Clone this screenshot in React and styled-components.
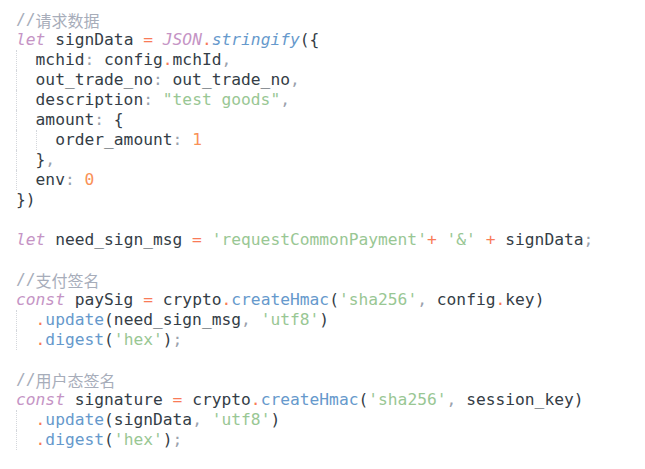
import React from "react";
import styled, { createGlobalStyle } from "styled-components";

const Global = createGlobalStyle`
  html, body { margin: 0; padding: 0; background: #ffffff; }
`;

const Editor = styled.div`
  box-sizing: border-box;
  width: 645px;
  height: 469px;
  background: #ffffff;
  padding: 10px 0 0 16px;
  font-family: "DejaVu Sans Mono", "Noto Sans CJK SC", monospace;
  font-size: 16.25px;
  color: #343d46;
  overflow: hidden;
`;

const Line = styled.div`
  display: flex;
  height: 20px;
  line-height: 20px;
  white-space: pre;
`;

const Indent = styled.span`
  display: inline-block;
  width: 2ch;
  height: 20px;
  flex: none;
  border-left: 1px dotted #d4d7dc;
  box-sizing: border-box;
`;

const colors = {
  t: "#343d46",
  c: "#a7adba",
  k: "#c594c5",
  f: "#6699cc",
  s: "#99c794",
  n: "#f99157",
  o: "#f97b57",
  p: "#9aa2ad",
};

const Tok = styled.span`
  color: ${(p) => colors[p.$kind] || colors.t};
  font-style: ${(p) => (p.$italic ? "italic" : "normal")};
  font-family: ${(p) =>
    p.$cjk
      ? `"Noto Sans CJK SC", "Noto Sans", sans-serif`
      : `"DejaVu Sans Mono", "Noto Sans CJK SC", monospace`};
  font-size: ${(p) => (p.$cjk ? "16px" : "inherit")};
`;

// token: [kind, text, italic?, cjk?]
const lines = [
  { i: 0, t: [["c", "//"], ["c", "请求数据", false, true]] },
  {
    i: 0,
    t: [
      ["k", "let", true], ["t", " signData "], ["o", "="], ["t", " "],
      ["k", "JSON", true], ["o", "."], ["f", "stringify", true], ["t", "({"],
    ],
  },
  { i: 1, t: [["t", "mchid"], ["p", ":"], ["t", " config"], ["o", "."], ["t", "mchId"], ["p", ","]] },
  { i: 1, t: [["t", "out_trade_no"], ["p", ":"], ["t", " out_trade_no"], ["p", ","]] },
  { i: 1, t: [["t", "description"], ["p", ":"], ["t", " "], ["s", '"test goods"'], ["p", ","]] },
  { i: 1, t: [["t", "amount"], ["p", ":"], ["t", " {"]] },
  { i: 2, t: [["t", "order_amount"], ["p", ":"], ["t", " "], ["n", "1"]] },
  { i: 1, t: [["t", "}"], ["p", ","]] },
  { i: 1, t: [["t", "env"], ["p", ":"], ["t", " "], ["n", "0"]] },
  { i: 0, t: [["t", "})"]] },
  { i: 0, t: [] },
  {
    i: 0,
    t: [
      ["k", "let", true], ["t", " need_sign_msg "], ["o", "="], ["t", " "],
      ["s", "'requestCommonPayment'"], ["o", "+"], ["t", " "], ["s", "'&'"],
      ["t", " "], ["o", "+"], ["t", " signData"], ["p", ";"],
    ],
  },
  { i: 0, t: [] },
  { i: 0, t: [["c", "//"], ["c", "支付签名", false, true]] },
  {
    i: 0,
    t: [
      ["k", "const", true], ["t", " paySig "], ["o", "="], ["t", " crypto"], ["o", "."],
      ["f", "createHmac"], ["t", "("], ["s", "'sha256'"], ["p", ","], ["t", " config"],
      ["o", "."], ["t", "key)"],
    ],
  },
  {
    i: 1,
    t: [["o", "."], ["f", "update"], ["t", "(need_sign_msg"], ["p", ","], ["t", " "], ["s", "'utf8'"], ["t", ")"]],
  },
  { i: 1, t: [["o", "."], ["f", "digest"], ["t", "("], ["s", "'hex'"], ["t", ")"], ["p", ";"]] },
  { i: 0, t: [] },
  { i: 0, t: [["c", "//"], ["c", "用户态签名", false, true]] },
  {
    i: 0,
    t: [
      ["k", "const", true], ["t", " signature "], ["o", "="], ["t", " crypto"], ["o", "."],
      ["f", "createHmac"], ["t", "("], ["s", "'sha256'"], ["p", ","], ["t", " session_key)"],
    ],
  },
  {
    i: 1,
    t: [["o", "."], ["f", "update"], ["t", "(signData"], ["p", ","], ["t", " "], ["s", "'utf8'"], ["t", ")"]],
  },
  { i: 1, t: [["o", "."], ["f", "digest"], ["t", "("], ["s", "'hex'"], ["t", ")"], ["p", ";"]] },
];

export default function App() {
  return (
    <>
      <Global />
      <Editor>
        {lines.map((line, li) => (
          <Line key={li}>
            {Array.from({ length: line.i }).map((_, k) => (
              <Indent key={k} />
            ))}
            {line.t.map(([kind, text, italic, cjk], ti) => (
              <Tok key={ti} $kind={kind} $italic={italic} $cjk={cjk}>
                {text}
              </Tok>
            ))}
          </Line>
        ))}
      </Editor>
    </>
  );
}
